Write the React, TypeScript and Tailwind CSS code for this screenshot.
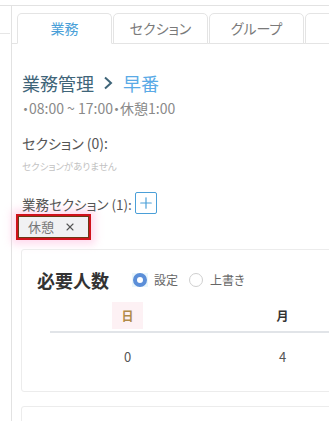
import { Plus, X } from 'lucide-react';

const font = "font-['Noto_Sans_CJK_JP','Noto_Sans',sans-serif] [font-feature-settings:'palt']";

function Tab({ label, active }: { label: string; active?: boolean }) {
  return (
    <div
      className={
        'w-[95px] h-[31px] shrink-0 flex items-center justify-center rounded-t-[5px] border border-[#e4e4e4] -mb-px text-[14px] ' +
        (active ? 'bg-white border-b-white text-[#4a9fd8]' : 'bg-white text-[#7a7a7a]')
      }
    >
      {label}
    </div>
  );
}

export default function App() {
  return (
    <div className={`w-[329px] h-[421px] overflow-hidden bg-white ${font}`}>
      <div className="h-[5px]" />
      <div className="flex h-[416px] border-t border-[#e2e2e2]">
        {/* 左の枠 */}
        <div className="w-[12px] shrink-0 border-r border-[#e2e2e2]">
          <div className="mt-[27px] h-px w-[10px] bg-[#e6e6e6]" />
        </div>

        <div className="flex-1 min-w-0">
          {/* タブ */}
          <div className="mt-[7px] flex gap-[1px] pl-[5px] border-b border-[#e4e4e4]">
            <Tab label="業務" active />
            <Tab label="セクション" />
            <Tab label="グループ" />
            <Tab label="" />
          </div>

          <div className="pl-[10px]">
            <h1 className="mt-[27px] h-[24px] flex items-center text-[18px] leading-[24px] text-[#3f6579]">
              <span>業務管理</span>
              <svg className="w-[12px] h-[14px] ml-[8px] mr-[9px]" viewBox="0 0 12 14" fill="none">
                <path d="M3 1.5 L9 7 L3 12.5" stroke="#3f6579" strokeWidth="2" />
              </svg>
              <span className="text-[#5aaae6]">早番</span>
            </h1>
            <p className="mt-[4px] text-[14px] leading-[18px] text-[#8a8a8a]">・08:00 ~ 17:00・休憩1:00</p>

            <p className="mt-[17px] text-[14px] leading-[18px] text-[#555]">セクション (0):</p>
            <p className="mt-[8px] text-[9.5px] leading-[12px] text-[#c2c2c2]">セクションがありません</p>

            <div className="mt-[20px] flex items-center h-[22px]">
              <span className="text-[13.5px] leading-[18px] text-[#555] pt-[2px]">業務セクション (1):</span>
              <div className="ml-[3px] w-[22px] h-[22px] border border-[#4a9fd8] rounded-[2px] flex items-center justify-center">
                <Plus className="w-[18px] h-[18px] text-[#4a9fd8]" strokeWidth={1.6} />
              </div>
            </div>

            {/* タグ */}
            <div className="-ml-[6px] w-[75px] h-[26px] border-[2px] border-[#d0121b] shadow-[0_0_8px_4px_rgba(255,170,215,0.45)]">
              <div className="w-full h-full border border-[#6a3a16] bg-[#f1f1f3] flex items-center pl-[9px] gap-[10px] text-[13px] text-[#777]">
                <span>休憩</span>
                <X className="w-[12px] h-[12px] text-[#555]" strokeWidth={2.2} />
              </div>
            </div>

            {/* 必要人数カード */}
            <div className="mt-[9px] -ml-[1px] w-[330px] h-[143px] border border-[#ececec] rounded-[3px] pt-[18px] pl-[15px]">
              <div className="flex items-center h-[24px]">
                <span className="text-[18px] font-bold text-[#333] leading-[24px]">必要人数</span>
                <div className="ml-[23px] flex items-center bg-[#eaf6fb] px-[1px]">
                  <span className="w-[14px] h-[14px] rounded-full border-[4px] border-[#5b8ed8] bg-white" />
                </div>
                <span className="ml-[6px] text-[12px] text-[#666]">設定</span>
                <span className="ml-[11px] w-[14px] h-[14px] rounded-full border border-[#cfcfcf] bg-white" />
                <span className="ml-[7px] text-[12px] text-[#666]">上書き</span>
              </div>

              <div className="ml-[13px] mt-[10px]">
                <div className="flex h-[31px] border-b-2 border-[#e1e4e8]">
                  <div className="w-[155px] shrink-0 flex justify-center">
                    <span className="h-[27px] w-[31px] flex items-center justify-center bg-[#fdf1f4] text-[12px] font-bold text-[#b08a48]">日</span>
                  </div>
                  <div className="w-[155px] shrink-0 flex justify-center">
                    <span className="h-[27px] flex items-center text-[12px] font-bold text-[#333]">月</span>
                  </div>
                </div>
                <div className="flex h-[46px] pt-[2px] items-center text-[13px] text-[#555]">
                  <div className="w-[155px] shrink-0 text-center">0</div>
                  <div className="w-[155px] shrink-0 text-center">4</div>
                </div>
              </div>
            </div>

            <div className="mt-[14px] -ml-[1px] w-[330px] h-[40px] border border-[#ececec] rounded-[3px]" />
          </div>
        </div>
      </div>
    </div>
  );
}
